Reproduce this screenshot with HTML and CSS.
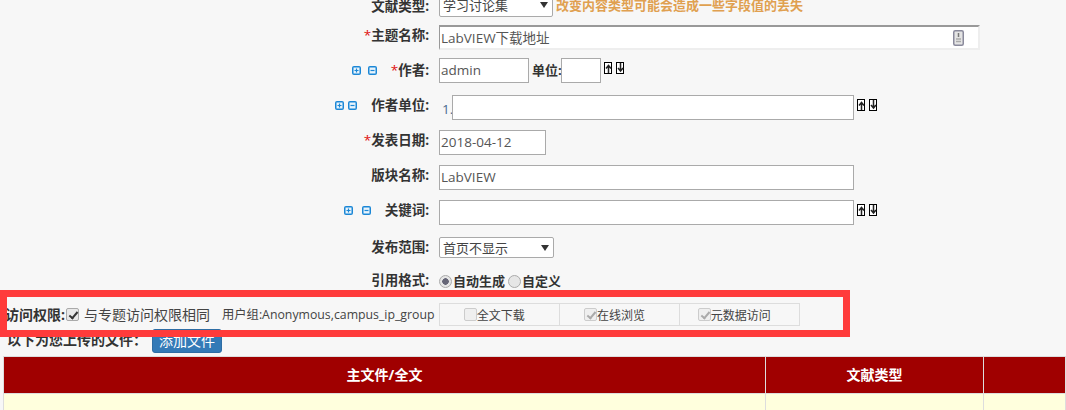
FILE: index.html
```html
<!DOCTYPE html>
<html lang="zh">
<head>
<meta charset="utf-8">
<title>文献编辑</title>
<link rel="stylesheet" href="styles.css">
</head>
<body>
<svg class="defs" width="0" height="0" aria-hidden="true">
  <symbol id="plus" viewBox="0 0 9 9"><rect width="9" height="9" rx="2" fill="#1b87d6"/><rect x="1.5" y="1.5" width="6" height="6" fill="#e8f4fc"/><path d="M2.5 4.5h4M4.5 2.5v4" stroke="#1b87d6" stroke-width="1.2"/></symbol>
  <symbol id="minus" viewBox="0 0 9 9"><rect width="9" height="9" rx="2" fill="#1b87d6"/><rect x="1.5" y="1.5" width="6" height="6" fill="#e8f4fc"/><path d="M2.5 4.5h4" stroke="#1b87d6" stroke-width="1.2"/></symbol>
  <symbol id="up" viewBox="0 0 8 12"><rect x=".5" y=".5" width="7" height="11" fill="#fff" stroke="#000"/><path d="M4.500 11V4M2 6.500l2.500-3L7 6.500" fill="none" stroke="#222" stroke-width="1.500"/></symbol>
  <symbol id="down" viewBox="0 0 8 12"><rect x=".5" y=".5" width="7" height="11" fill="#fff" stroke="#000"/><path d="M4.500 1v7M2 6l2.500 3L7 6" fill="none" stroke="#222" stroke-width="1.500"/></symbol>
</svg>
<main class="page">
  <form class="form">
    <div class="row row-type">
      <div class="label label-first">文献类型:</div>
      <div class="field">
        <span class="select select-type">学习讨论集</span>
        <span class="warn">改变内容类型可能会造成一些字段值的丢失</span>
      </div>
    </div>
    <div class="row">
      <div class="label"><i>*</i>主题名称:</div>
      <div class="field">
        <div class="title-box">
          <span>LabVIEW下载地址</span>
          <svg class="title-icon" width="11" height="16" viewBox="0 0 11 16"><rect x=".75" y=".75" width="9.500" height="14.500" rx="1.500" fill="#e4e4e4" stroke="#8a8a9c" stroke-width="1.500"/><path d="M5.500 3v4" stroke="#777" stroke-width="1.500"/><path d="M3 9h5M3 11.500h5" stroke="#aaa" stroke-width="1.500"/></svg>
        </div>
      </div>
    </div>
    <div class="row row-gap-12">
      <div class="label label-low">
        <span class="tools tools-m"><svg class="tool"><use href="#plus"/></svg><svg class="tool"><use href="#minus"/></svg></span>
        <i>*</i>作者:
      </div>
      <div class="field">
        <div class="input w-author">admin</div>
        <span class="unit-label">单位:</span>
        <div class="input w-unit"></div>
        <span class="arrows"><svg class="arrow"><use href="#up"/></svg><svg class="arrow"><use href="#down"/></svg></span>
      </div>
    </div>
    <div class="row row-gap-10">
      <div class="label">
        <span class="tools tools-s"><svg class="tool"><use href="#plus"/></svg><svg class="tool"><use href="#minus"/></svg></span>
        作者单位:
      </div>
      <div class="field">
        <span class="index">1.</span>
        <div class="input w-org"></div>
        <span class="arrows"><svg class="arrow"><use href="#up"/></svg><svg class="arrow"><use href="#down"/></svg></span>
      </div>
    </div>
    <div class="row row-gap-10">
      <div class="label"><i>*</i>发表日期:</div>
      <div class="field"><div class="input w-date">2018-04-12</div></div>
    </div>
    <div class="row row-gap-10">
      <div class="label">版块名称:</div>
      <div class="field"><div class="input w-long">LabVIEW</div></div>
    </div>
    <div class="row row-gap-12">
      <div class="label">
        <span class="tools tools-l"><svg class="tool"><use href="#plus"/></svg><svg class="tool"><use href="#minus"/></svg></span>
        关键词:
      </div>
      <div class="field">
        <div class="input w-long"></div>
        <span class="arrows"><svg class="arrow"><use href="#up"/></svg><svg class="arrow"><use href="#down"/></svg></span>
      </div>
    </div>
    <div class="row row-gap-12">
      <div class="label">发布范围:</div>
      <div class="field"><span class="select select-scope">首页不显示</span></div>
    </div>
    <div class="row">
      <div class="label">引用格式:</div>
      <div class="field cite">
        <input class="radio" type="radio" name="cite" checked><span>自动生成</span>
        <input class="radio" type="radio" name="cite"><span>自定义</span>
      </div>
    </div>
    <div class="access">
      <strong class="access-title">访问权限:</strong>
      <input class="check" type="checkbox" checked>
      <span class="same">与专题访问权限相同</span>
      <span class="group">用户组:Anonymous,campus_ip_group</span>
      <div class="perm">
        <label class="perm-cell"><input class="check check-off" type="checkbox" disabled>全文下载</label>
        <label class="perm-cell"><input class="check check-off" type="checkbox" checked disabled>在线浏览</label>
        <label class="perm-cell"><input class="check check-off" type="checkbox" checked disabled>元数据访问</label>
      </div>
    </div>
    <div class="files">
      <strong>以下为您上传的文件：</strong>
      <button class="add" type="button">添加文件</button>
    </div>
  </form>
  <table class="file-table">
    <colgroup><col class="c1"><col class="c2"><col></colgroup>
    <thead><tr><th>主文件/全文</th><th>文献类型</th><th></th></tr></thead>
    <tbody><tr><td></td><td></td><td></td></tr></tbody>
  </table>
  <div class="highlight"></div>
</main>
</body>
</html>
```
FILE: styles.css
```css
* { box-sizing: border-box; }
html, body { margin: 0; height: 410px; overflow: hidden; background: #f7f7f7; }
body { font: 13px/20px "Open Sans", "Noto Sans CJK SC", sans-serif; color: #333; }
.defs { position: absolute; }
.page { position: relative; height: 410px; overflow: hidden; }
.form { display: flex; flex-direction: column; gap: 8px; margin-top: -6px; }

.row { display: grid; grid-template-columns: 431px 1fr; column-gap: 8px; align-items: start; }
.row-type { height: 23px; }
.row-gap-10 { margin-bottom: 2px; }
.row-gap-12 { margin-bottom: 4px; }

.label { display: flex; justify-content: flex-end; align-items: center; height: 20px; padding-right: 2px; font-size: 13.500px; font-weight: 700; white-space: nowrap; }
.label-first { margin-top: 2px; }
.label-low { margin-top: 2px; }
.label i { color: #e01010; font-style: normal; font-weight: 400; }
.field { display: flex; align-items: flex-start; white-space: nowrap; }

.tools { display: flex; margin-right: 14px; }
.tool { width: 9px; height: 9px; display: block; }
.tools-s { gap: 4px; }
.tools-m { gap: 7px; }
.tools-l { gap: 9px; }

.select { position: relative; display: block; height: 23px; line-height: 21px; padding-left: 3px; background: #fff; border: 1px solid #aaa; border-radius: 2px; color: #444; font-size: 13px; }
.select::after { content: ""; position: absolute; right: 4px; top: 7px; border: 4px solid transparent; border-top: 6px solid #333; border-bottom: 0; }
.select-type { width: 114px; }
.select-scope { width: 115px; height: 21px; line-height: 20px; }
.warn { margin-left: 3px; font-weight: 700; color: #e0a050; line-height: 23px; }

.title-box { display: flex; justify-content: space-between; align-items: center; width: 541px; height: 25px; padding: 0 14px 0 1px; background: #fff; border: 2px solid; border-color: #999 #eee #eee #999; border-left-width: 1px; color: #555; font-size: 13.500px; }
.title-icon { display: block; }

.input { height: 25px; line-height: 23px; padding-left: 1px; background: #fff; border: 1px solid #aaa; color: #555; font-size: 13.500px; }
.w-author { width: 90px; }
.w-unit { width: 40px; }
.w-org { width: 402px; }
.w-date { width: 107px; }
.w-long { width: 415px; }
.unit-label { width: 32px; padding-left: 3px; font-weight: 700; line-height: 25px; }
.index { width: 13px; height: 25px; padding-left: 3px; color: #4a6a8f; line-height: 29px; font-size: 13.500px; }

.arrows { display: flex; gap: 4px; margin: 4px 0 0 3px; }
.arrow { width: 8px; height: 12px; display: block; }

.cite { align-items: center; height: 22px; gap: 1px; font-weight: 700; }
.radio { appearance: none; width: 13px; height: 13px; margin: 0; border: 1px solid #aaa; border-radius: 50%; background: #e6e6e6; }
.radio:checked { background: radial-gradient(circle, #667 0 3px, #e6e6e6 3.500px); }
.cite span + .radio { margin-left: 2px; }

.check { appearance: none; width: 13px; height: 13px; margin: 0; border: 1px solid #aaa; border-radius: 2px; background: #e8e8e8; position: relative; flex: none; }
.check:checked::before { content: ""; position: absolute; left: 4px; top: 1px; width: 3px; height: 7px; border: solid #333; border-width: 0 2px 2px 0; transform: rotate(40deg); }
.check-off { border-color: #ccc; background: #efefef; margin-top: -4px; }
.check-off:checked::before { border-color: #aaa; }

.access { display: flex; align-items: center; height: 23px; margin-top: 3px; padding-left: 5px; }
.access-title { width: 58px; font-size: 14px; white-space: nowrap; }
.access > .check { margin-left: 3px; }
.same { margin-left: 5px; font-size: 14px; color: #444; }
.group { margin-left: 12px; font-size: 12.300px; color: #444; }
.perm { display: flex; width: 361px; height: 23px; margin-left: 4px; border: 1px solid #ddd; }
.perm-cell { display: flex; align-items: center; justify-content: center; width: 120px; padding: 3px 10px 0 0; font-size: 12px; color: #444; }
.perm-cell + .perm-cell { border-left: 1px solid #ddd; }

.files { display: flex; align-items: flex-end; height: 24px; margin-top: -5px; padding-left: 7px; font-size: 14px; }
.files strong { line-height: 26px; font-size: 14px; width: 145px; }
.add { width: 70px; height: 24px; padding: 0; background: #337ab7; border: 1px solid #2e6da4; border-radius: 3px; color: #fff; font: 14px/20px "Open Sans", "Noto Sans CJK SC", sans-serif; }

.file-table { width: 1063px; margin: 3px 0 0 3px; border-collapse: collapse; table-layout: fixed; }
.c1 { width: 762px; }
.c2 { width: 218px; }
.file-table th { height: 37px; padding: 0; background: #a00000; color: #fff; font-size: 14px; font-weight: 700; border: 1px solid #ddd; }
.file-table td { height: 30px; background: #ffffdd; border: 1px solid #ddd; border-width: 0 1px; }

.highlight { position: absolute; left: 0; top: 290px; width: 850px; height: 47px; border: 7px solid #ff3b3b; pointer-events: none; }
```
